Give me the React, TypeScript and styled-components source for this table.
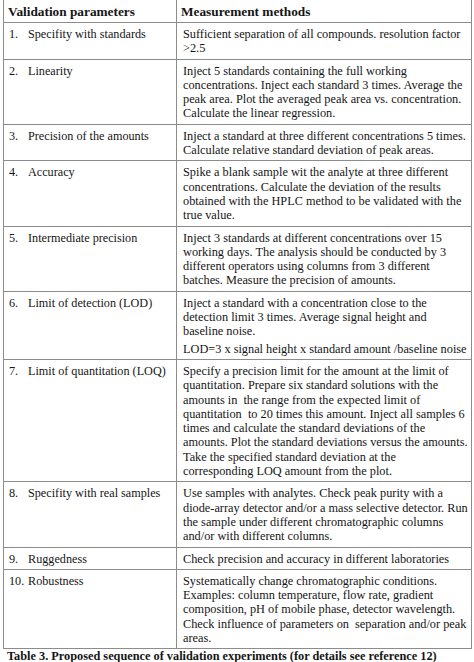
import React from 'react'
import styled, { createGlobalStyle } from 'styled-components'

const GlobalStyle = createGlobalStyle`
  html, body {
    margin: 0;
    padding: 0;
    background: #ffffff;
  }
  body {
    font-family: 'Liberation Serif', 'Times New Roman', serif;
    color: #151515;
  }
`

const Page = styled.div`
  width: 474px;
  height: 662px;
  overflow: hidden;
  padding-left: 3px;
  box-sizing: border-box;
`

const Table = styled.div`
  width: 469px;
  border-left: 1px solid #8c8c8c;
  border-right: 1px solid #8c8c8c;
  box-sizing: border-box;
`

const Row = styled.div`
  display: grid;
  grid-template-columns: 173px 1fr;
  border-bottom: 1px solid #8c8c8c;
`

const HeadCell = styled.div<{ $last?: boolean }>`
  padding: 4px 5px 3px 4px;
  font-weight: 700;
  font-size: 13.3px;
  line-height: 15px;
  white-space: nowrap;
  border-right: ${(p) => (p.$last ? 'none' : '1px solid #8c8c8c')};
`

const ParamCell = styled.div`
  display: flex;
  padding: 4px 4px 3px 5px;
  font-size: 12.2px;
  line-height: 14.3px;
  white-space: nowrap;
  border-right: 1px solid #8c8c8c;
`

const Num = styled.span`
  width: 19px;
  flex: none;
`

const MethodCell = styled.div`
  padding: 4px 2px 3px 6px;
  font-size: 12.3px;
  line-height: 14.3px;
  white-space: nowrap;
`

const Para = styled.p<{ $gap?: number }>`
  margin: ${(p) => p.$gap ?? 0}px 0 0 0;
`

const Caption = styled.div`
  padding-left: 4px;
  font-weight: 700;
  font-size: 12.3px;
  line-height: 15px;
  white-space: nowrap;
`

interface Step {
  param: string
  methods: string[][]
}

const steps: Step[] = [
  {
    param: 'Specifity with standards',
    methods: [['Sufficient separation of all compounds. resolution factor', '>2.5']],
  },
  {
    param: 'Linearity',
    methods: [
      [
        'Inject 5 standards containing the full working',
        'concentrations. Inject each standard 3 times. Average the',
        'peak area. Plot the averaged peak area vs. concentration.',
        'Calculate the linear regression.',
      ],
    ],
  },
  {
    param: 'Precision of the amounts',
    methods: [
      [
        'Inject a standard at three different concentrations 5 times.',
        'Calculate relative standard deviation of peak areas.',
      ],
    ],
  },
  {
    param: 'Accuracy',
    methods: [
      [
        'Spike a blank sample wit the analyte at three different',
        'concentrations. Calculate the deviation of the results',
        'obtained with the HPLC method to be validated with the',
        'true value.',
      ],
    ],
  },
  {
    param: 'Intermediate precision',
    methods: [
      [
        'Inject 3 standards at different concentrations over 15',
        'working days. The analysis should be conducted by 3',
        'different operators using columns from 3 different',
        'batches. Measure the precision of amounts.',
      ],
    ],
  },
  {
    param: 'Limit of detection (LOD)',
    methods: [
      [
        'Inject a standard with a concentration close to the',
        'detection limit 3 times. Average signal height and',
        'baseline noise.',
      ],
      ['LOD=3 x signal height x standard amount /baseline noise'],
    ],
  },
  {
    param: 'Limit of quantitation (LOQ)',
    methods: [
      [
        'Specify a precision limit for the amount at the limit of',
        'quantitation. Prepare six standard solutions with the',
        'amounts in  the range from the expected limit of',
        'quantitation  to 20 times this amount. Inject all samples 6',
        'times and calculate the standard deviations of the',
        'amounts. Plot the standard deviations versus the amounts.',
        'Take the specified standard deviation at the',
        'corresponding LOQ amount from the plot.',
      ],
    ],
  },
  {
    param: 'Specifity with real samples',
    methods: [
      [
        'Use samples with analytes. Check peak purity with a',
        'diode-array detector and/or a mass selective detector. Run',
        'the sample under different chromatographic columns',
        'and/or with different columns.',
      ],
    ],
  },
  {
    param: 'Ruggedness',
    methods: [['Check precision and accuracy in different laboratories']],
  },
  {
    param: 'Robustness',
    methods: [
      [
        'Systematically change chromatographic conditions.',
        'Examples: column temperature, flow rate, gradient',
        'composition, pH of mobile phase, detector wavelength.',
        'Check influence of parameters on  separation and/or peak',
        'areas.',
      ],
    ],
  },
]

export default function App() {
  return (
    <Page>
      <GlobalStyle />
      <Table>
        <Row>
          <HeadCell>Validation parameters</HeadCell>
          <HeadCell $last>Measurement methods</HeadCell>
        </Row>
        {steps.map((step, i) => (
          <Row key={step.param}>
            <ParamCell>
              <Num>{i + 1}.</Num>
              <span>{step.param}</span>
            </ParamCell>
            <MethodCell>
              {step.methods.map((lines, j) => (
                <Para key={j} $gap={j > 0 ? 3 : 0}>
                  {lines.map((line, k) => (
                    <React.Fragment key={k}>
                      {k > 0 && <br />}
                      {line.replace(/  /g, '\u00a0 ')}
                    </React.Fragment>
                  ))}
                </Para>
              ))}
            </MethodCell>
          </Row>
        ))}
      </Table>
      <Caption>Table 3. Proposed sequence of validation experiments (for details see reference 12)</Caption>
    </Page>
  )
}
